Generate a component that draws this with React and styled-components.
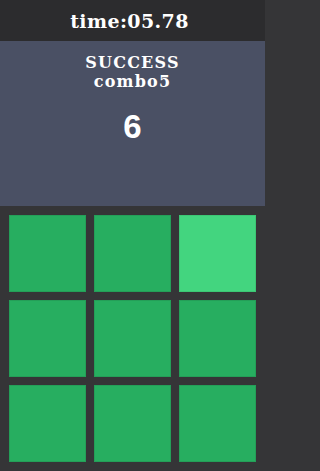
import styled, { createGlobalStyle } from "styled-components";

const GlobalStyle = createGlobalStyle`
  html, body {
    margin: 0;
    padding: 0;
    background: #353537;
  }
`;

const Screen = styled.div`
  width: 265px;
  height: 471px;
  display: flex;
  flex-direction: column;
  overflow: hidden;
`;

const TimeBar = styled.div`
  height: 41px;
  background: #2c2c2e;
  display: flex;
  align-items: center;
  justify-content: center;
  color: #fff;
  font-family: "DejaVu Serif", serif;
  font-weight: bold;
  font-size: 19px;
  letter-spacing: 0.4px;
  padding-right: 6px;
`;

const Panel = styled.div`
  height: 165px;
  background: #4a5064;
  display: flex;
  flex-direction: column;
  align-items: center;
  color: #fff;
  padding-top: 12px;
  box-sizing: border-box;
`;

const StatusLine = styled.div`
  font-family: "DejaVu Serif", serif;
  font-weight: bold;
  font-size: 16px;
  line-height: 19px;
  letter-spacing: 1.2px;
  text-align: center;
`;

const Score = styled.div`
  margin-top: 19px;
  font-family: "Liberation Sans", Arial, sans-serif;
  font-weight: bold;
  font-size: 33px;
  line-height: 34px;
`;

const Board = styled.div`
  flex: 1;
  background: #353537;
  padding: 9px;
  display: grid;
  grid-template-columns: repeat(3, 77px);
  grid-template-rows: repeat(3, 77px);
  gap: 8px;
`;

const Tile = styled.div`
  background: ${props => (props.lit ? "#43d57f" : "#27ae60")};
  border: 1px solid ${props => (props.lit ? "#3cc774" : "#249f58")};
  box-sizing: border-box;
`;

const tiles = [false, false, true, false, false, false, false, false, false];

export default function App() {
  return (
    <>
      <GlobalStyle />
      <Screen>
        <TimeBar>time:05.78</TimeBar>
        <Panel>
          <StatusLine>SUCCESS</StatusLine>
          <StatusLine>combo5</StatusLine>
          <Score>6</Score>
        </Panel>
        <Board>
          {tiles.map((lit, i) => (
            <Tile key={i} lit={lit} />
          ))}
        </Board>
      </Screen>
    </>
  );
}
